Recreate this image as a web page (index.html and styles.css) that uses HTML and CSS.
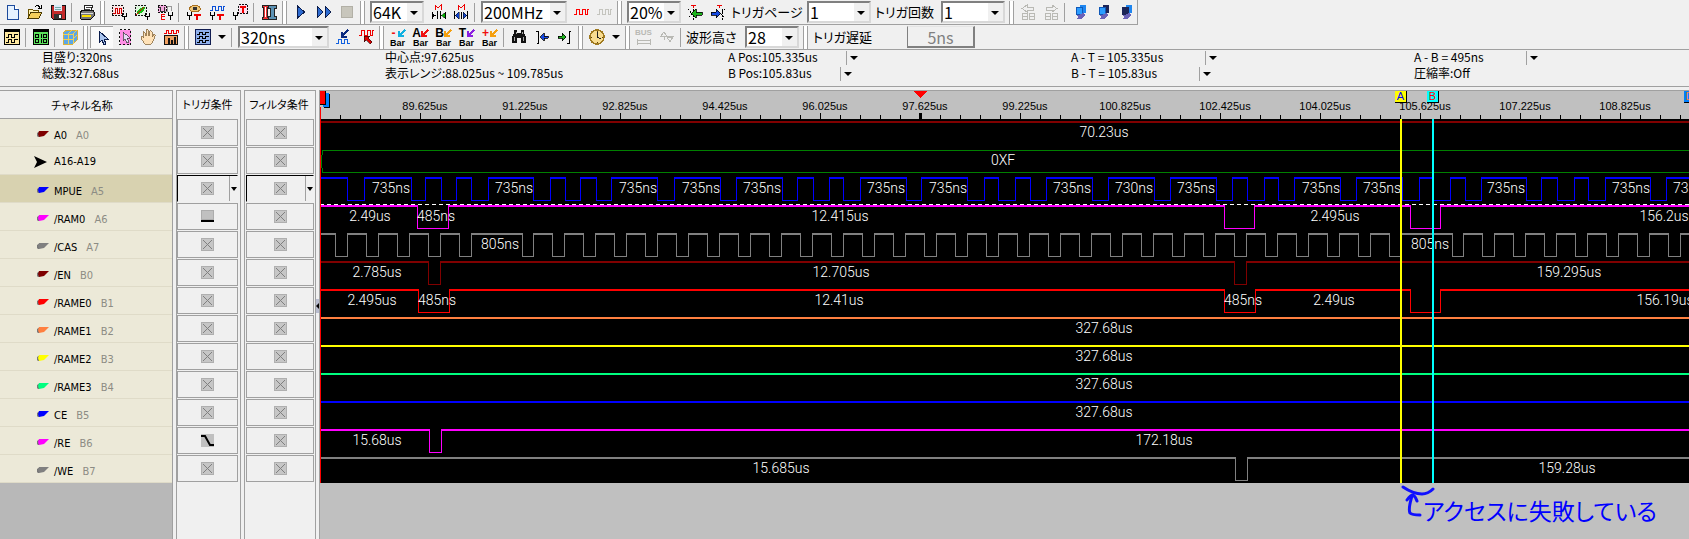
FILE: index.html
```html
<!DOCTYPE html>
<html lang="ja">
<head>
    <meta charset="UTF-8">
    <meta name="viewport" content="width=device-width, initial-scale=1.0">
    <title>Logic Analyzer</title>
    <link rel="stylesheet" href="styles.css">
</head>
<body>
<svg class="defs" aria-hidden="true">
    <symbol id="i-new" viewBox="0 0 16 16"><path d="M3 1h7l4 4v10H3z" fill="#e4f1ff" stroke="#1c4a9c"/><path d="M10 1v4h4" fill="#fff" stroke="#1c4a9c"/></symbol>
    <symbol id="i-open" viewBox="0 0 16 16"><path d="M1 14V5h4l1 1h5v2" fill="#fff3b0" stroke="#6b5200"/><path d="M1 14l3-6h11l-3 6z" fill="#f5cf5a" stroke="#4a3a00"/><path d="M8 3c2-2 4-2 5 1M11 4h3V1" fill="none" stroke="#000"/></symbol>
    <symbol id="i-save" viewBox="0 0 16 16"><path d="M1 1h14v14H3l-2-2z" fill="#c42b2b" stroke="#111"/><path d="M4 1h8v6H4z" fill="#dcecf8"/><path d="M5 3h6M5 5h6" stroke="#7aa"/><path d="M4 10h8v5H4z" fill="#333"/><path d="M9 11h2v3H9z" fill="#fff"/></symbol>
    <symbol id="i-print" viewBox="0 0 16 16"><path d="M5 6l1-5h8l-2 5z" fill="#fff" stroke="#222"/><path d="M7 3h5M6 5h5" stroke="#444"/><path d="M1 8l3-2h10l1 2v4l-3 3H2l-1-2z" fill="#777" stroke="#111"/><path d="M2 9h12" stroke="#ddd"/><path d="M3 12h9" stroke="#ffe000" stroke-width="2"/></symbol>
    <symbol id="i-wbox" viewBox="0 0 16 16"><path d="M1 1.500h11v10H1z" fill="#fbe3e3" stroke="#111" stroke-dasharray="2 1"/><path d="M2 9h2V4h2v5h2V4h2v5h2" fill="none" stroke="#c00"/><path d="M11 9v3h4V9M13 12v4" fill="none" stroke="#000"/></symbol>
    <symbol id="i-gbox" viewBox="0 0 16 16"><path d="M1 1.500h11v10H1z" fill="#dff5df" stroke="#111" stroke-dasharray="2 1"/><path d="M3 10c0-4 3-7 8-7 0 4-4 7-8 7z" fill="#15c015"/><path d="M2 11l8-8" stroke="#d00"/><path d="M11 9v3h4V9M13 12v4" fill="none" stroke="#000"/></symbol>
    <symbol id="i-ebox" viewBox="0 0 16 16"><path d="M1 1h8v7H1z" fill="#f3a8dd" stroke="#111" stroke-dasharray="2 1"/><path d="M2 3h1v4h4V3" fill="none" stroke="#333"/><path d="M8 7h2V2h4v5" fill="none" stroke="#999"/><path d="M8 10H4v5h4M4 12.500h4" fill="none" stroke="#e00"/><path d="M11 8v3h4V8M13 11v5" fill="none" stroke="#000"/></symbol>
    <symbol id="i-eye" viewBox="0 0 16 16"><path d="M3 5c3-5 9-5 12 0-3 4-9 4-12 0z" fill="#f0c878" stroke="#a87020"/><circle cx="9" cy="4.500" r="2" fill="#333"/><path d="M1 8v3h4V8M3 11v5" fill="none" stroke="#000"/><path d="M8 11h7M11 11v5" stroke="#e00" stroke-width="2"/></symbol>
    <symbol id="i-wavet" viewBox="0 0 16 16"><path d="M1 6h2V2h3v4h3V2h3v4h2V2h2" fill="none" stroke="#0a50d8"/><path d="M1 8v3h4V8M3 11v5" fill="none" stroke="#000"/><path d="M8 11h7M11 11v5" stroke="#e00" stroke-width="2"/></symbol>
    <symbol id="i-tbox" viewBox="0 0 16 16"><path d="M6.500.5h9v9h-9z" fill="#fde" stroke="#111" stroke-dasharray="2 1"/><path d="M8 3h6M11 3v6" stroke="#e00" stroke-width="2"/><path d="M1 8v3h4V8M3 11v5" fill="none" stroke="#000"/></symbol>
    <symbol id="i-spool" viewBox="0 0 16 16"><path d="M1 1h6v2H6v10h1v2H1v-2h1V3H1z" fill="#e33" stroke="#222"/><path d="M7 1h8v3h-2v8h2v3H7v-3h2V4H7z" fill="#5b91b3" stroke="#222"/><path d="M4 3v10" stroke="#fff"/></symbol>
    <symbol id="i-play" viewBox="0 0 16 16"><path d="M4.500 2l7 6-7 6z" fill="#2d6bd0" stroke="#0a1c4c"/></symbol>
    <symbol id="i-ff" viewBox="0 0 16 16"><path d="M1 2l6 6-6 6zM9 2l6 6-6 6z" fill="#2d6bd0" stroke="#0a1c4c"/></symbol>
    <symbol id="i-stop" viewBox="0 0 16 16"><path d="M2 2h11v11H2z" fill="#c8c6bc" stroke="#b2b0a6"/></symbol>
    <symbol id="i-min" viewBox="0 0 16 16"><path d="M5 6V1l3 3 3-3v5" fill="none" stroke="#e00"/><path d="M7 7v8M10 7v8M2 8v7M15 8v7" stroke="#000"/><path d="M2 9l4 2.500L2 14z" fill="#000"/><path d="M15 9l-4 2.500 4 2.500z" fill="#0a0" stroke="#000" stroke-width=".5"/></symbol>
    <symbol id="i-mout" viewBox="0 0 16 16"><path d="M5 6V1l3 3 3-3v5" fill="none" stroke="#e00"/><path d="M1.500 7v8M14.500 7v8M8 8v7" stroke="#000"/><path d="M2 11.500L6 8v7zM14 11.500L10 8v7z" fill="#14c" stroke="#000" stroke-width=".5"/></symbol>
    <symbol id="i-sq" viewBox="0 0 16 16"><path d="M1 10h2V5h3v5h3V5h3v5h2V5h2" fill="none" stroke="currentColor"/></symbol>
    <symbol id="i-tl" viewBox="0 0 16 16"><path d="M4 1h5M6.500 1v3" stroke="#e00"/><path d="M1 5l4 5-4 4M6.500 5v11" fill="none" stroke="#000" stroke-dasharray="2 1"/><path d="M4 9.500L9 5v3h6v3H9v3z" fill="#1db51d" stroke="#000" stroke-width=".8"/></symbol>
    <symbol id="i-tr" viewBox="0 0 16 16"><path d="M7 1h5M9.500 1v3" stroke="#e00"/><path d="M15 5l-4 5 4 4M12 5v11" fill="none" stroke="#000" stroke-dasharray="2 1"/><path d="M11 9.500L6 5v3H1v3h5v3z" fill="#1448e0" stroke="#000" stroke-width=".8"/></symbol>
    <symbol id="i-pgl" viewBox="0 0 16 16"><path d="M2 4.500L7 1v2h6v3H7v2zM2 9h5v6H2zM9 9h5v6H9zM2 12h5M9 12h5" fill="none" stroke="#b9b9b4"/></symbol>
    <symbol id="i-pgr" viewBox="0 0 16 16"><path d="M14 4.500L9 1v2H3v3h6v2zM2 9h5v6H2zM9 9h5v6H9zM2 12h5M9 12h5" fill="none" stroke="#b9b9b4"/></symbol>
    <symbol id="i-net1" viewBox="0 0 16 16"><path d="M8 1h6v8H8z" fill="#1e86f0"/><path d="M4 3h6v7H4z" fill="#2b9cff" stroke="#1058b8"/><path d="M4 11h3l4-2 2 2-4 4H4l2-2z" fill="#6a62b8"/></symbol>
    <symbol id="i-net2" viewBox="0 0 16 16"><path d="M8 1h6v8H8z" fill="#1c2558"/><path d="M4 3h6v7H4z" fill="#2b9cff" stroke="#1058b8"/><path d="M4 11h3l4-2 2 2-4 4H4l2-2z" fill="#6a62b8"/></symbol>
    <symbol id="i-net3" viewBox="0 0 16 16"><path d="M8 1h6v8H8z" fill="#1e86f0"/><path d="M4 3h6v7H4z" fill="#1c2558" stroke="#1c2558"/><path d="M4 11h3l4-2 2 2-4 4H4l2-2z" fill="#6a62b8"/></symbol>

    <symbol id="i-wwin" viewBox="0 0 16 16"><path d="M.5.5h15v15H.5z" fill="#ffe9a0" stroke="#000"/><path d="M0 2h16" stroke="#000" stroke-width="2"/><path d="M2 8.500h2v-3h3v3h3v-3h4M2 13.500h2v-3h3v3h3v-3h4" fill="none" stroke="#000"/></symbol>
    <symbol id="i-swin" viewBox="0 0 16 16"><path d="M.5.5h15v15H.5z" fill="#5be05b" stroke="#000"/><path d="M0 2h16" stroke="#000" stroke-width="2"/><path d="M2.500 5.500h3v3h-3zM10.500 5.500h3v3h-3zM2.500 10.500h3v3h-3zM8 5v4M8 10v4M10.500 10.500h3v3h-3z" fill="none" stroke="#000"/></symbol>
    <symbol id="i-cube" viewBox="0 0 16 16"><path d="M1 4l4-3h10v10l-4 4H1z" fill="#5aa7e8" stroke="#d8b13a"/><path d="M1 5h10v10M11 5l4-4M6 5v10M1 10h10l4-4M6 5l4-4" fill="none" stroke="#f0cf55"/></symbol>
    <symbol id="i-ptr" viewBox="0 0 16 16"><path d="M5 1v12l3-3 2 5 2-1-2-5h4z" fill="#a9c4ee" stroke="#0a1c4c"/></symbol>
    <symbol id="i-selptr" viewBox="0 0 16 16"><path d="M2.500.5h11v15h-11z" fill="#ff8fe6" stroke="#111" stroke-dasharray="2 2"/><path d="M6 3v9l2-2 2 4 2-1-2-4h3z" fill="#e8d8f8" stroke="#333" stroke-width=".7"/></symbol>
    <symbol id="i-hand" viewBox="0 0 16 16"><path d="M5 15L1 9c0-2 2-1 3 0L3 3c1-1 2 0 2 1l1 3V1c1-1 2-1 2 0l1 6 1-5c1-1 2 0 2 1v5l2-3c1 0 2 1 1 2l-2 5-2 3z" fill="#ffe2b8" stroke="#8a6a3c" stroke-width=".8"/></symbol>
    <symbol id="i-hist" viewBox="0 0 16 16"><path d="M1 4h2V1h2v3h3V1h2v3h3V1h2v3" fill="none" stroke="#e00"/><path d="M1.500 6.500h13v9h-13z" fill="#f0a060" stroke="#111"/><path d="M5 9h2v7H5zM8 11h2v5H8zM11 8h2v8h-2z" fill="#111"/></symbol>
    <symbol id="i-waves" viewBox="0 0 16 16"><path d="M.5.5h15v15H.5z" fill="#8fb0ec" stroke="#101c50"/><path d="M2 5.500h2v-2h3v2h3v-2h4M2 9.500h2v-2h3v2h3v-2h4M2 13.500h2v-2h3v2h3v-2h4" fill="none" stroke="#000"/></symbol>
    <symbol id="i-wblue" viewBox="0 0 16 16"><path d="M1 14h2v-4h3v4h3v-4h3v4h3" fill="none" stroke="#1060e0"/><path d="M13 1L7 7M7 3v5h5" fill="none" stroke="#0a2a80" stroke-width="2"/></symbol>
    <symbol id="i-wred" viewBox="0 0 16 16"><path d="M1 6h2V1h3v5h3V1h3v5h2V1h2" fill="none" stroke="#e00"/><path d="M6 7h6l-2 2 4 4-2 2-4-4-2 2z" fill="#d00" stroke="#111" stroke-width=".6"/></symbol>
    <symbol id="i-arrow-sw" viewBox="0 0 8 8"><path d="M7 1L2 6M1 2v5h5" fill="none" stroke="currentColor" stroke-width="2"/></symbol>
    <symbol id="i-find" viewBox="0 0 16 16"><path d="M3 1h3v3h4V1h3v3l2 4v6h-5v-5H6v5H1V8l2-4z" fill="#111"/><path d="M3.500 8v4M12 8v4M5 3v2M11 3v2" stroke="#aaa"/></symbol>
    <symbol id="i-prev" viewBox="0 0 16 16"><path d="M2 2h2v12H3" fill="none" stroke="#000"/><path d="M6 8l4-4v3h4v2h-4v3z" fill="#1448e0" stroke="#000" stroke-width=".8"/></symbol>
    <symbol id="i-next" viewBox="0 0 16 16"><path d="M14 2h-2v12h-2" fill="none" stroke="#000"/><path d="M9 8L5 4v3H1v2h4v3z" fill="#1db51d" stroke="#000" stroke-width=".8"/></symbol>
    <symbol id="i-clock" viewBox="0 0 16 16"><circle cx="8" cy="8" r="7" fill="#f8dc90" stroke="#a07a20" stroke-width="1.600"/><path d="M8 3v5l4 2" fill="none" stroke="#222"/><path d="M8 2v1M8 13v1M2 8h1M13 8h1" stroke="#604000"/></symbol>
    <symbol id="i-bus" viewBox="0 0 16 16"><path d="M1 11.500h14M1 14.500h14M1.500 10v6M14.500 10v6" stroke="#b9b9b4"/></symbol>
    <symbol id="i-bal" viewBox="0 0 16 16"><path d="M2 7l3-4 3 4zM5 7v4M8 8h6l-3 5zM1 7h14" fill="none" stroke="#b9b9b4"/></symbol>

    <symbol id="i-probe" viewBox="0 0 14 8"><path d="M1 3l3-2-1 6H2L1 6z" fill="#777"/><path d="M3 1h10L8 6l-5 1-1-3z" fill="currentColor"/></symbol>
    <symbol id="i-group" viewBox="0 0 14 12"><path d="M0 0l13 6-13 6 3-6z" fill="#000"/></symbol>
    <symbol id="i-x" viewBox="0 0 13 13"><path d="M0 0h13v13H0z" fill="#c6c6c6"/><path d="M.5.5h12v12H.5z" fill="none" stroke="#999" stroke-dasharray="1 1"/><path d="M2 2l9 9M11 2l-9 9" stroke="#808080"/></symbol>
    <symbol id="i-low" viewBox="0 0 13 13"><path d="M0 0h13v10H0z" fill="#c0c0c0"/><path d="M.5.5h12v9H.5z" fill="none" stroke="#999" stroke-dasharray="1 1"/><path d="M0 11h13" stroke="#000" stroke-width="2"/></symbol>
    <symbol id="i-fall" viewBox="0 0 13 13"><path d="M0 0h13v13H0z" fill="#c0c0c0"/><path d="M0 2h4l5 9h4" fill="none" stroke="#000" stroke-width="2"/></symbol>
</svg>

<header>
    <div class="toolbar top">
        <button title="New"><svg><use href="#i-new"/></svg></button>
        <button title="Open"><svg><use href="#i-open"/></svg></button>
        <button title="Save"><svg><use href="#i-save"/></svg></button>
        <i class="sep"></i>
        <button title="Print"><svg><use href="#i-print"/></svg></button>
        <i class="grip"></i>
        <button title="Sampling"><svg><use href="#i-wbox"/></svg></button>
        <button title="Channel"><svg><use href="#i-gbox"/></svg></button>
        <button title="Edge"><svg><use href="#i-ebox"/></svg></button>
        <i class="sep"></i>
        <button title="Trigger view"><svg><use href="#i-eye"/></svg></button>
        <button title="Trigger wave"><svg><use href="#i-wavet"/></svg></button>
        <button title="Trigger setup"><svg><use href="#i-tbox"/></svg></button>
        <i class="sep"></i>
        <button title="Compress"><svg><use href="#i-spool"/></svg></button>
        <i class="grip"></i>
        <button title="Run"><svg><use href="#i-play"/></svg></button>
        <button title="Repeat run"><svg><use href="#i-ff"/></svg></button>
        <button title="Stop"><svg><use href="#i-stop"/></svg></button>
        <i class="grip"></i>
        <label class="combo narrow"><select aria-label="Memory"><option>64K</option></select></label>
        <button title="Memory in"><svg><use href="#i-min"/></svg></button>
        <button title="Memory out"><svg><use href="#i-mout"/></svg></button>
        <i class="sep"></i>
        <label class="combo wide"><select aria-label="Clock"><option>200MHz</option></select></label>
        <button class="red" title="Internal clock"><svg><use href="#i-sq"/></svg></button>
        <button class="off" title="External clock"><svg><use href="#i-sq"/></svg></button>
        <i class="grip"></i>
        <label class="combo narrow"><select aria-label="Position"><option>20%</option></select></label>
        <button title="Previous trigger"><svg><use href="#i-tl"/></svg></button>
        <button title="Next trigger"><svg><use href="#i-tr"/></svg></button>
        <label class="caption page" for="page">トリガページ</label>
        <span class="combo count"><select id="page"><option>1</option></select></span>
        <label class="caption times" for="times">トリガ回数</label>
        <span class="combo count"><select id="times"><option>1</option></select></span>
        <i class="grip"></i>
        <button title="Page left"><svg><use href="#i-pgl"/></svg></button>
        <button title="Page right"><svg><use href="#i-pgr"/></svg></button>
        <i class="sep"></i>
        <button title="Link 1"><svg><use href="#i-net1"/></svg></button>
        <button title="Link 2"><svg><use href="#i-net2"/></svg></button>
        <button title="Link 3"><svg><use href="#i-net3"/></svg></button>
    </div>
    <div class="toolbar">
        <button title="Waveform window"><svg><use href="#i-wwin"/></svg></button>
        <i class="sep"></i>
        <button title="State window"><svg><use href="#i-swin"/></svg></button>
        <i class="sep"></i>
        <button title="Navigator"><svg><use href="#i-cube"/></svg></button>
        <i class="grip"></i>
        <button class="pressed" title="Select"><svg><use href="#i-ptr"/></svg></button>
        <button title="Area select"><svg><use href="#i-selptr"/></svg></button>
        <button title="Pan"><svg><use href="#i-hand"/></svg></button>
        <button title="Statistics"><svg><use href="#i-hist"/></svg></button>
        <i class="grip"></i>
        <button title="Wave mode"><svg><use href="#i-waves"/></svg></button>
        <button class="drop" title="Wave mode list"></button>
        <i class="sep"></i>
        <label class="combo scale"><select aria-label="Scale"><option>320ns</option></select></label>
        <button title="Zoom wave"><svg><use href="#i-wblue"/></svg></button>
        <button title="Undo zoom"><svg><use href="#i-wred"/></svg></button>
        <i class="grip"></i>
        <button class="bar" title="Delete bar"><b class="c-red">-</b><svg class="c-cyan"><use href="#i-arrow-sw"/></svg><small>Bar</small></button>
        <button class="bar" title="A bar"><b>A</b><svg class="c-red"><use href="#i-arrow-sw"/></svg><small>Bar</small></button>
        <button class="bar" title="B bar"><b>B</b><svg class="c-orange"><use href="#i-arrow-sw"/></svg><small>Bar</small></button>
        <button class="bar" title="T bar"><b>T</b><svg class="c-purple"><use href="#i-arrow-sw"/></svg><small>Bar</small></button>
        <button class="bar" title="Add bar"><b class="c-red">+</b><svg class="c-orange"><use href="#i-arrow-sw"/></svg><small>Bar</small></button>
        <i class="sep"></i>
        <button title="Find"><svg><use href="#i-find"/></svg></button>
        <button title="Previous edge"><svg><use href="#i-prev"/></svg></button>
        <button title="Next edge"><svg><use href="#i-next"/></svg></button>
        <i class="grip"></i>
        <button title="Clock"><svg><use href="#i-clock"/></svg></button>
        <button class="drop" title="Clock list"></button>
        <i class="grip"></i>
        <button class="bus" title="Bus"><small>BUS</small><svg><use href="#i-bus"/></svg></button>
        <button title="Compare"><svg><use href="#i-bal"/></svg></button>
        <i class="sep"></i>
        <label class="caption height" for="waveheight">波形高さ</label>
        <span class="combo narrow"><select id="waveheight"><option>28</option></select></span>
        <i class="grip"></i>
        <span class="caption delay">トリガ遅延</span>
        <button class="delay-value" disabled>5ns</button>
    </div>
</header>

<section class="info">
    <div>
        <p>目盛り:320ns</p>
        <p>総数:327.68us</p>
    </div>
    <div>
        <p>中心点:97.625us</p>
        <p>表示レンジ:88.025us ~ 109.785us</p>
    </div>
    <div>
        <p>A Pos:105.335us<button title="A Pos"></button></p>
        <p>B Pos:105.83us<button title="B Pos"></button></p>
    </div>
    <div class="diff">
        <p>A - T = 105.335us<button title="A - T"></button></p>
        <p>B - T = 105.83us<button title="B - T"></button></p>
    </div>
    <div class="diff">
        <p>A - B = 495ns<button title="A - B"></button></p>
        <p>圧縮率:Off</p>
    </div>
</section>

<main>
    <section class="names">
        <h2>チャネル名称</h2>
        <ul id="names"></ul>
    </section>
    <section class="cond">
        <h2>トリガ条件</h2>
        <div id="trigger"></div>
    </section>
    <section class="cond filter">
        <h2>フィルタ条件</h2>
        <div id="filter"></div>
        <span class="splitter"></span>
    </section>
    <section class="waves">
        <svg class="ruler" id="ruler"></svg>
        <div id="waves"></div>
        <span class="cursor start"></span>
        <span class="cursor a"></span>
        <span class="cursor b"></span>
        <span class="flag f-start"></span>
        <span class="flag f-a">A</span>
        <span class="flag f-b">B</span>
        <span class="flag f-d">D</span>
        <div class="note">
            <svg width="34" height="34"><path d="M2 3c6 4 12 7 19 7 5 0 8-2 11-5" /><path d="M6 16c2-3 4-5 6-5 2 1 3 3 4 6M11 12c-2 7-4 13-2 17 2 2 6 2 10 2"/></svg>
            <span>アクセスに失敗している</span>
        </div>
    </section>
</main>

<script>
    // edges: x of each level change, every trace starts high
    const mpue = [27, 44, 91, 105, 121, 136, 151, 168, 213, 230, 245, 260, 276, 291, 337, 354,
        400, 416, 462, 477, 493, 509, 523, 540, 586, 601, 647, 664, 678, 695, 710, 726, 772, 788,
        834, 850, 896, 912, 927, 944, 958, 974, 1020, 1036, 1082, 1099, 1113, 1130, 1145, 1161,
        1206, 1221, 1237, 1254, 1268, 1285, 1330, 1346, 1392];
    const mpueLabels = [71, 194, 318, 381, 442, 566, 628, 752, 814, 876, 1001, 1062, 1186, 1311, 1372]
        .map(x => [x, x === 814 ? "730ns" : "735ns"]);

    const cas = [15, 27, 46, 58, 77, 89, 108, 120, 139, 151, 202];
    for (let x = 213; x < 1080; x += 31) cas.push(x, x + 19);
    cas.push(1081, 1132);
    for (let x = 1143; x < 2400; x += 31) cas.push(x, x + 19);

    const channels = [
        { name: "A0", id: "A0", color: "#800000", edges: [], labels: [[784, "70.23us"]] },
        { name: "A16-A19", group: true, color: "#008000", labels: [[683, "0XF"]] },
        { name: "MPUE", id: "A5", color: "#0000ff", selected: true, edges: mpue, labels: mpueLabels },
        { name: "/RAM0", id: "A6", color: "#ff00ff", trigger: "low", edges: [97, 128, 904, 934, 1090, 1120],
            labels: [[50, "2.49us"], [116, "485ns"], [520, "12.415us"], [1015, "2.495us"], [1344, "156.2us"]] },
        { name: "/CAS", id: "A7", color: "#808080", edges: cas, labels: [[180, "805ns"], [1110, "805ns"]] },
        { name: "/EN", id: "B0", color: "#800000", edges: [108, 120, 914, 926],
            labels: [[57, "2.785us"], [521, "12.705us"], [1249, "159.295us"]] },
        { name: "/RAME0", id: "B1", color: "#ff0000", edges: [98, 129, 904, 935, 1090, 1120],
            labels: [[52, "2.495us"], [117, "485ns"], [519, "12.41us"], [923, "485ns"], [1014, "2.49us"], [1345, "156.19us"]] },
        { name: "/RAME1", id: "B2", color: "#ff8040", edges: [], labels: [[784, "327.68us"]] },
        { name: "/RAME2", id: "B3", color: "#ffff00", edges: [], labels: [[784, "327.68us"]] },
        { name: "/RAME3", id: "B4", color: "#00ff80", edges: [], labels: [[784, "327.68us"]] },
        { name: "CE", id: "B5", color: "#0000ff", edges: [], labels: [[784, "327.68us"]] },
        { name: "/RE", id: "B6", color: "#ff00ff", trigger: "fall", edges: [109, 121],
            labels: [[57, "15.68us"], [844, "172.18us"]] },
        { name: "/WE", id: "B7", color: "#808080", edges: [915, 927],
            labels: [[461, "15.685us"], [1247, "159.28us"]] }
    ];

    function trace(ch) {
        if (ch.group) {
            return `<path d="M4000 3.5H3L1.5 10V19L3 25.5H4000" fill="none" stroke="${ch.color}"/>`;
        }
        let high = "";
        let low = "";
        let x = 0;
        ch.edges.forEach((edge, i) => {
            if (i % 2 === 0) {
                high += `M${x} 3H${edge + 1}`;
                low += `M${edge + 0.5} 3V25.5`;
            } else {
                low += `H${edge + 0.5}V3`;
            }
            x = edge;
        });
        if (ch.edges.length % 2 === 0) high += `M${x} 3H4000`;
        return `<path d="${high}" fill="none" stroke="${ch.color}" stroke-width="2"/>
            <path d="${low}" fill="none" stroke="${ch.color}"/>`;
    }

    function cell(icon, selected) {
        return `<button class="cell${selected ? " selected" : ""}"><svg><use href="#i-${icon}"/></svg></button>`;
    }

    channels.forEach((ch, i) => {
        document.querySelector("#names").insertAdjacentHTML("beforeend",
            `<li class="${ch.selected ? "selected" : ""}${ch.group ? "group" : ""}">
                <svg color="${ch.color}"><use href="#i-${ch.group ? "group" : "probe"}"/></svg>
                <span>${ch.name}</span><em>${ch.id || ""}</em></li>`);
        document.querySelector("#trigger").insertAdjacentHTML("beforeend", cell(ch.trigger || "x", ch.selected));
        document.querySelector("#filter").insertAdjacentHTML("beforeend", cell("x", ch.selected));

        const labels = ch.labels.map(l => `<text x="${l[0]}" y="18">${l[1]}</text>`).join("");
        const dash = channels[i - 1] && channels[i - 1].selected
            ? '<path d="M0 1.5H4000" stroke="#fff" stroke-dasharray="4 3"/>' : "";
        document.querySelector("#waves").insertAdjacentHTML("beforeend",
            `<svg class="wave">${trace(ch)}${dash}${labels}</svg>`);
    });

    // time ruler, 100px = 1.6us
    const rulerBox = document.querySelector("#ruler");
    const rulerWidth = rulerBox.getBoundingClientRect().width;
    let ruler = "";
    for (let x = 0; x < rulerWidth; x += 20) {
        const major = x % 100 === 0;
        ruler += `<path d="M${x + 0.5} ${major ? 22 : 24}V28" stroke="#000" stroke-width="${x === 600 ? 3 : 1}"/>`;
        if (major && x > 0) {
            ruler += `<text x="${x + 5}" y="19">${(88.025 + x * 0.016).toFixed(3)}us</text>`;
        }
    }
    ruler += '<path d="M594 0H607L600.5 7z" fill="#f00"/>';
    rulerBox.innerHTML = ruler;
</script>
</body>
</html>
```
FILE: styles.css
```css
* {
    box-sizing: border-box;
}

body {
    margin: 0;
    min-height: 100vh;
    display: flex;
    flex-direction: column;
    background: #f0f0f0;
    color: #000;
    font-family: "Noto Sans CJK JP", sans-serif;
    font-feature-settings: "palt";
    overflow: hidden;
}

h2, p, ul {
    margin: 0;
    padding: 0;
    font-weight: normal;
    list-style: none;
}

button {
    margin: 0;
    padding: 0;
    border: none;
    background: none;
    font-family: inherit;
}

.defs {
    position: absolute;
    width: 0;
    height: 0;
}

/* toolbars */
.toolbar {
    display: flex;
    align-items: center;
    height: 24px;
    width: max-content;
    white-space: nowrap;
}

.toolbar.top {
    height: 25px;
    border-bottom: 1px solid #a0a0a0;
    border-right: 1px solid #a0a0a0;
}

.toolbar > * {
    flex: none;
}

.toolbar button {
    display: flex;
    align-items: center;
    justify-content: center;
    width: 23px;
    height: 22px;
}

.toolbar svg {
    width: 16px;
    height: 16px;
    shape-rendering: crispEdges;
}

.toolbar .pressed {
    background: #fafafa;
    border-top: 1px solid #a0a0a0;
    border-left: 1px solid #a0a0a0;
}

.sep {
    width: 1px;
    height: 19px;
    margin: 0 3px 0 2px;
    background: #a0a0a0;
}

.grip {
    width: 5px;
    height: 23px;
    margin: 0 2px;
    background: #fff;
    border-left: 1px solid #a0a0a0;
    border-right: 1px solid #a0a0a0;
}

.toolbar .drop {
    width: 15px;
}

.drop::after,
.combo::after,
.info button::after,
.cell.selected::after {
    content: "";
    border: 4px solid transparent;
    border-top-color: #000;
    border-bottom: none;
}

.combo {
    position: relative;
    display: block;
    height: 22px;
    margin: 0 2px 0 3px;
    border: 2px solid #808080;
    border-right-color: #d8d8d8;
    border-bottom-color: #d8d8d8;
    background: #fff;
}

.combo::after {
    position: absolute;
    top: 8px;
    right: 4px;
}

.combo select {
    appearance: none;
    display: block;
    width: 100%;
    height: 18px;
    padding: 0 0 1px 1px;
    border: none;
    border-radius: 0;
    background: linear-gradient(#f0f0f0, #f0f0f0) right / 15px 100% no-repeat;
    color: #000;
    font-family: inherit;
    font-size: 16px;
    line-height: 16px;
}

.narrow { width: 54px; }
.wide { width: 86px; }
.count { width: 64px; }
.scale { width: 91px; }

.caption {
    font-size: 13px;
    line-height: 18px;
    padding-left: 2px;
}

.page { width: 75px; }
.times { width: 65px; }
.height { width: 58px; }
.delay { width: 97px; padding-left: 3px; }

.toolbar .delay-value {
    width: 68px;
    border: 1px solid #808080;
    border-top-color: #e4e4e4;
    border-width: 1px 2px 2px 1px;
    color: #808080;
    font-size: 16px;
    line-height: 16px;
}

.red { color: #ff0000; }
.off { color: #c4c4be; }
.c-red { color: #f01010; }
.c-cyan { color: #10b0e0; }
.c-orange { color: #f5a010; }
.c-purple { color: #8a20e0; }

.toolbar .bar {
    display: grid;
    grid-template: 11px 8px / 9px 8px;
    align-content: center;
    color: #000;
}

.bar b {
    font: bold 12px/12px "Liberation Sans", sans-serif;
}

.bar .c-red {
    color: #f01010;
}

.toolbar .bar svg {
    width: 8px;
    height: 8px;
}

.bar small {
    grid-column: 1 / 3;
    font: bold 9px/8px "Liberation Sans", sans-serif;
}

.toolbar .bus {
    position: relative;
}

.bus small {
    position: absolute;
    top: 3px;
    left: 3px;
    font: bold 8px/8px "Liberation Sans", sans-serif;
    color: #b9b9b4;
}

/* measurements */
.info {
    display: grid;
    grid-template-columns: 385fr 343fr 343fr 343fr 275fr;
    height: 38px;
    border-top: 1px solid #a0a0a0;
    border-bottom: 1px solid #a0a0a0;
    font-size: 12px;
    line-height: 14px;
    white-space: nowrap;
}

.info div:first-child {
    padding-left: 42px;
}

.info p {
    display: flex;
    height: 16px;
}

.info button {
    display: flex;
    align-items: center;
    height: 14px;
    margin: 1px 0 0 28px;
    padding-left: 3px;
    border-left: 1px solid #a0a0a0;
}

.info .diff button {
    margin-left: 42px;
}

/* channel panels */
main {
    flex: 1;
    display: grid;
    grid-template-columns: 173px 65px 72px 1fr;
    column-gap: 3px;
    margin-top: 3px;
}

h2 {
    font-size: 11px;
    text-align: center;
}

.names {
    background: #b8b8b8;
    border-top: 1px solid #a0a0a0;
    border-right: 1px solid #a0a0a0;
}

.names h2 {
    height: 28px;
    line-height: 28px;
    padding-right: 8px;
    background: #f0f0f0;
    border-bottom: 1px solid #a0a0a0;
}

.names li {
    display: flex;
    align-items: center;
    height: 28px;
    padding: 6px 0 0 36px;
    background: #ece9d8;
    border-bottom: 1px solid #dfdbc8;
    font-family: "DejaVu Sans Condensed", "DejaVu Sans", sans-serif;
    font-size: 11px;
    line-height: 14px;
}

.names li.group {
    padding-top: 2px;
    padding-left: 34px;
}

.names li.selected {
    background: #d8d2b0;
}

.names li svg {
    width: 14px;
    height: 8px;
    margin: 0 4px 3px 0;
}

.names li.group svg {
    height: 12px;
    margin: 0 6px 0 0;
}

.names em {
    margin-left: 9px;
    color: #8c8c84;
    font-style: normal;
}

.cond {
    position: relative;
    border: 1px solid #a0a0a0;
    border-bottom: none;
}

.cond h2 {
    height: 28px;
    padding-right: 2px;
    line-height: 26px;
}

.cell {
    display: flex;
    align-items: center;
    justify-content: center;
    width: 61px;
    height: 27px;
    margin-bottom: 1px;
    border: 1px solid #a0a0a0;
}

.filter .cell {
    width: 68px;
    margin-left: 1px;
}

.cell svg {
    width: 13px;
    height: 13px;
}

.cell.selected {
    position: relative;
    border-color: #000 transparent transparent #000;
}

.cell.selected::before {
    content: "";
    position: absolute;
    right: 7px;
    top: 0;
    bottom: 0;
    border-left: 1px solid #a0a0a0;
}

.cell.selected::after {
    position: absolute;
    right: 0;
    border-width: 4px 3px 0;
}

.splitter {
    position: absolute;
    top: 208px;
    right: -5px;
    width: 4px;
    height: 14px;
    background: #b8bccf;
}

.splitter::after {
    content: "";
    position: absolute;
    top: 3px;
    right: 0;
    border: 4px solid transparent;
    border-right-color: #000;
    border-left: none;
}

/* waveforms */
.waves {
    position: relative;
    min-width: 0;
    overflow: hidden;
    background: #c0c0c0;
    border-top: 1px solid #a0a0a0;
    border-left: 1px solid #a0a0a0;
}

.waves svg {
    display: block;
}

.ruler {
    width: 100%;
    height: 28px;
}

.wave {
    width: 100%;
    height: 28px;
    background: #000;
}

.ruler path, .wave path {
    shape-rendering: crispEdges;
}

.ruler text {
    font: 11px "Liberation Sans", sans-serif;
    text-anchor: middle;
}

.wave text {
    font: 300 14px Roboto, "Liberation Sans", sans-serif;
    fill: #fff;
    text-anchor: middle;
}

.cursor {
    position: absolute;
    top: 28px;
    width: 2px;
    height: 364px;
}

.cursor.start {
    top: 16px;
    left: 0;
    width: 1px;
    height: 376px;
    background: #ff0000;
}

.cursor.a {
    left: 1080px;
    background: #ffff00;
}

.cursor.b {
    left: 1112px;
    background: #00ffff;
}

.flag {
    position: absolute;
    top: 0;
    width: 12px;
    height: 12px;
    border-right: 1px solid #000;
    border-bottom: 1px solid #000;
    font: 11px/11px "Liberation Sans", sans-serif;
    text-align: center;
}

.f-start {
    left: 0;
    width: 6px;
    height: 14px;
    background: #ff0000;
    box-shadow: 3px 2px 0 #0080ff, 4px 3px 0 #000;
}

.f-a {
    left: 1075px;
    background: #ffff00;
    color: #0000ff;
}

.f-b {
    left: 1107px;
    background: #00ffff;
    color: #ff0000;
}

.f-d {
    left: 1364px;
    background: #0080ff;
    color: #ff8040;
}

.note {
    position: absolute;
    top: 393px;
    left: 1081px;
    display: flex;
    color: #0000ff;
    font-size: 23px;
    line-height: 26px;
    white-space: nowrap;
}

.note svg {
    fill: none;
    stroke: #1010ff;
    stroke-width: 3;
    stroke-linecap: round;
}

.note span {
    margin: 13px 0 0 -12px;
}
```
